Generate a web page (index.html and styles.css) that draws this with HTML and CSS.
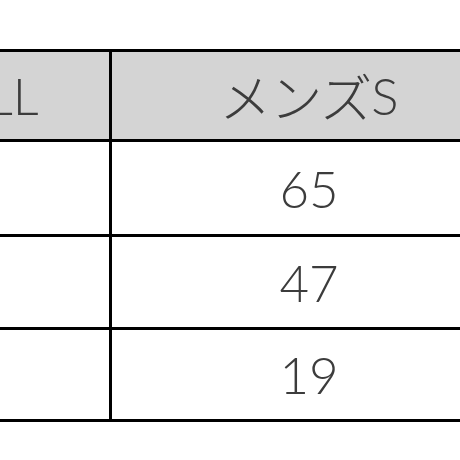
FILE: index.html
```html
<!DOCTYPE html>
<html lang="ja">
<head>
<meta charset="utf-8">
<link rel="stylesheet" href="styles.css">
</head>
<body>
<div class="frame">
  <div class="sheet">
    <div class="cell head first"><span class="kana">レディース</span>LL</div>
    <div class="cell head"><span class="kana">メンズ</span>S</div>
    <div class="cell r1"></div>
    <div class="cell r1">65</div>
    <div class="cell r2"></div>
    <div class="cell r2">47</div>
    <div class="cell r3"></div>
    <div class="cell r3">19</div>
  </div>
</div>
</body>
</html>
```

FILE: styles.css
```css
html, body {
  margin: 0;
  padding: 0;
  background: #fff;
}
.frame {
  width: 460px;
  height: 460px;
  overflow: hidden;
  padding-top: 49px;
  box-sizing: border-box;
}
.sheet {
  display: grid;
  grid-template-columns: 397px 394px;
  grid-template-rows: 87px 92px 90px 89px;
  gap: 3px;
  padding: 3px 0;
  background: #000;
  margin-left: -288px;
  width: max-content;
}
.cell {
  background: #fff;
  display: flex;
  align-items: center;
  justify-content: center;
  font-family: "Lato", "Noto Sans CJK JP", sans-serif;
  font-weight: 300;
  font-size: 51px;
  color: #3c3c3c;
  white-space: nowrap;
}
.kana {
  font-family: "Noto Sans CJK JP", sans-serif;
  font-size: 52px;
  letter-spacing: -1px;
}
.head {
  background: #d4d4d4;
}
.first {
  padding-right: 44px;
}
```
